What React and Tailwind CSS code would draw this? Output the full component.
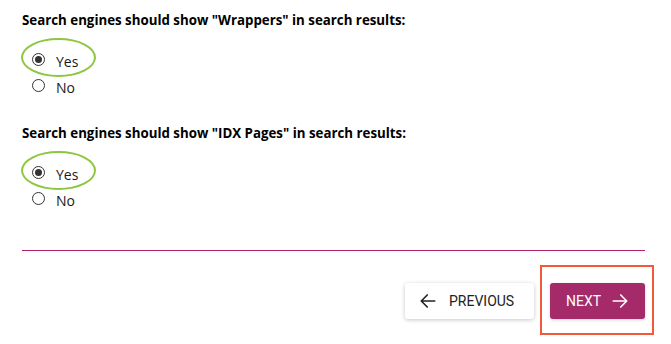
import React from "react";

function Radio({ checked }) {
  return (
    <span className="flex h-[13px] w-[13px] items-center justify-center rounded-full border border-[#333] bg-white">
      {checked && <span className="h-[7px] w-[7px] rounded-full bg-[#333]" />}
    </span>
  );
}

function Group({ title }) {
  return (
    <div>
      <h2 className="text-[13.3px] font-bold leading-[16px] text-black">{title}</h2>
      <div className="mt-[18px]">
        <div className="relative flex h-[26px] items-center pl-[10px]">
          <span className="pointer-events-none absolute left-[-1px] top-[-8px] h-[39px] w-[75px] rounded-[50%] border-2 border-[#8dc63f]" />
          <Radio checked />
          <span className="ml-[11px] mt-[5px] text-[14px] leading-[16px] text-[#1a1a1a]">Yes</span>
        </div>
        <div className="flex h-[26px] items-center pl-[10px]">
          <Radio />
          <span className="ml-[11px] mt-[5px] text-[14px] leading-[16px] text-[#1a1a1a]">No</span>
        </div>
      </div>
    </div>
  );
}

export default function App() {
  return (
    <div
      className="h-[344px] w-[671px] overflow-hidden bg-white pl-[22px] pt-[12px]"
      style={{ fontFamily: '"Open Sans", "Noto Sans", sans-serif' }}
    >
      <div className="w-[623px]">
        <Group title={'Search engines should show "Wrappers" in search results:'} />
        <div className="mt-[27px]">
          <Group title={'Search engines should show "IDX Pages" in search results:'} />
        </div>
        <div className="mt-[39px] border-t border-[#b0206e]" />
        <div
          className="mt-[32px] flex justify-end gap-[16px]"
          style={{ fontFamily: 'Roboto, "Liberation Sans", sans-serif' }}
        >
          <button className="flex h-[36px] w-[129px] items-center rounded-[3px] bg-white pl-[14px] text-[14px] text-[#222] shadow-[0_1px_4px_rgba(0,0,0,0.22)]">
            <svg width="18" height="18" viewBox="0 0 24 24" fill="none" stroke="#222" strokeWidth="2.2" strokeLinecap="round" strokeLinejoin="round">
              <path d="M21 12H3M11 4l-8 8 8 8" />
            </svg>
            <span className="ml-[12px]">PREVIOUS</span>
          </button>
          <div className="relative">
            <span className="pointer-events-none absolute left-[-10px] right-[-9px] top-[-18px] bottom-[-16px] border-2 border-[#f15a38]" />
            <button className="flex h-[36px] w-[95px] items-center rounded-[3px] bg-[#a42a6a] pl-[16px] text-[14px] text-white shadow-[0_1px_3px_rgba(0,0,0,0.2)]">
              <span>NEXT</span>
              <svg className="ml-[10px]" width="18" height="18" viewBox="0 0 24 24" fill="none" stroke="#fff" strokeWidth="2.2" strokeLinecap="round" strokeLinejoin="round">
                <path d="M3 12h18M13 4l8 8-8 8" />
              </svg>
            </button>
          </div>
        </div>
      </div>
    </div>
  );
}
